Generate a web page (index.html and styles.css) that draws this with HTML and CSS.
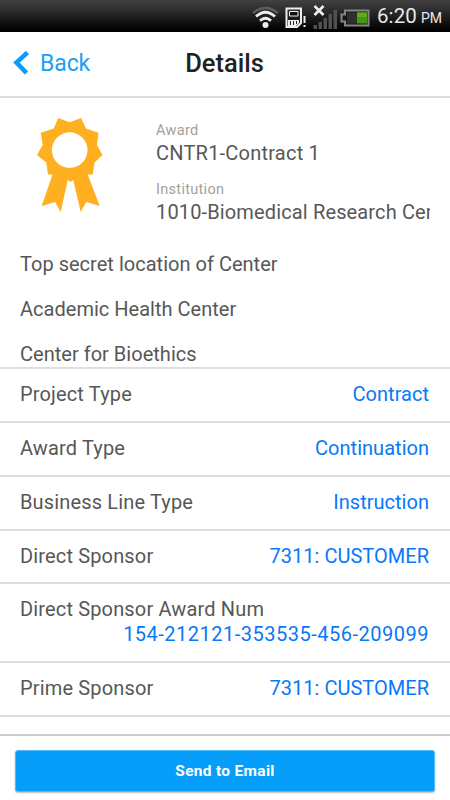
FILE: index.html
```html
<!DOCTYPE html>
<html lang="en">
<head>
<meta charset="utf-8">
<title>Details</title>
<link rel="stylesheet" href="styles.css">
</head>
<body>
<div class="screen">
  <div class="status">
    <svg class="status-icons" width="124" height="31" viewBox="0 0 124 31" fill="none">
      <path d="M1 12Q13.500 2 26 12" stroke="#5c5c5c" stroke-width="2.500"/>
      <path d="M4 15.500Q13.500 7 23 15.500M8 19.800Q13.500 14.500 19 19.800" stroke="#eee" stroke-width="2.800"/>
      <circle cx="13.500" cy="24" r="3" fill="#eee"/>
      <path d="M34.500 7.500H49V22L45 26H34.500Z" stroke="#eee" stroke-width="2"/>
      <path d="M37.500 10.500H46V15H37.500Z" fill="#111" stroke="#eee" stroke-width="1"/>
      <path d="M36 19H47V22L44 25H36Z" fill="#eee"/>
      <path d="M38.500 20V24M41.500 20V24M44.500 20V23" stroke="#222"/>
      <path d="M52.500 15V22M52.500 24V26" stroke="#eee" stroke-width="2"/>
      <path d="M62.500 5L71.500 14M71.500 5L62.500 14" stroke="#eee" stroke-width="2.600"/>
      <path d="M61.500 24h3.500v4h-3.500zM66.500 21h3.500v7h-3.500zM71.500 17h3.500v11h-3.500zM76.500 13h3.500v15h-3.500zM81.500 9h3.500v19h-3.500z" fill="#505050"/>
      <path d="M93 9.500H116.500V24.500H93V20.500H89.500V13.500H93Z" fill="#181818" stroke="#858585" stroke-width="2"/>
      <path d="M95 11.500H105V22.500H95Z" fill="#303030"/>
      <path d="M105 11.500H115V22.500H105Z" fill="#439b12"/>
      <path d="M105 11.500H115V16H105Z" fill="#5cab20"/>
    </svg>
    <span class="clock">6:20</span><span class="meridiem">PM</span>
  </div>
  <header class="navbar">
    <a class="back">
      <svg width="16" height="25" viewBox="0 0 16 25"><path d="M14.500 1.500L3.500 11.500L13.500 22" fill="none" stroke="#0a9df8" stroke-width="4.600"/></svg>
      <span>Back</span>
    </a>
    <h1>Details</h1>
  </header>
  <main class="content">
    <section class="summary">
      <svg class="ribbon" width="66" height="95" viewBox="0 0 66 95" fill="#ffb020">
        <path fill-rule="evenodd" d="M21.300 0L32.500 4.300L44 0L49 10.500L61.500 14.700L60 27L65.500 37L57.500 44.500L55.700 56.500L50.700 56.500L62.700 88L49.300 84L43.700 94L36.300 62L33.500 64L30.700 62L23.700 94L18 84L4.700 88L15.500 56.500L11 56.500L9.300 44.500L0 37L5.700 27L3.700 14.700L16.700 10.500ZM32.700 14.300A17.800 17.800 0 1 0 32.700 49.900A17.800 17.800 0 1 0 32.700 14.300Z"/>
      </svg>
      <dl class="facts">
        <dt>Award</dt><dd class="award">CNTR1-Contract 1</dd>
        <dt>Institution</dt><dd class="institution">1010-Biomedical Research Center</dd>
      </dl>
    </section>
    <section class="places">
      <p>Top secret location of Center</p>
      <p>Academic Health Center</p>
      <p>Center for Bioethics</p>
    </section>
    <ul class="rows">
      <li><span>Project Type</span><b>Contract</b></li>
      <li><span>Award Type</span><b>Continuation</b></li>
      <li><span>Business Line Type</span><b>Instruction</b></li>
      <li><span>Direct Sponsor</span><b>7311: CUSTOMER</b></li>
      <li class="tall"><span>Direct Sponsor Award Num</span><b class="number">154-212121-353535-456-209099</b></li>
      <li><span>Prime Sponsor</span><b>7311: CUSTOMER</b></li>
      <li class="last"><span>Prime Sponsor Award Num</span></li>
    </ul>
  </main>
  <footer class="footer"><button class="send">Send to Email</button></footer>
</div>
</body>
</html>
```
FILE: styles.css
```css
* { box-sizing: border-box; }
body, h1, dl, dd, p, ul { margin: 0; padding: 0; }
body { font-family: Roboto, "Liberation Sans", sans-serif; color: #575757; background: #fff; }
.screen { height: 800px; display: flex; flex-direction: column; overflow: hidden; }
.status { flex: none; height: 32px; display: flex; align-items: center; justify-content: flex-end; padding-right: 8px; background: linear-gradient(#414141, #2b2b2b 35%, #000 95%); color: #e8e8e8; }
.status-icons { margin-right: 1px; }
.clock { font-size: 20.500px; letter-spacing: .1px; line-height: 32px; }
.meridiem { font-size: 14px; margin: 4px 0 0 4px; }
.navbar { flex: none; height: 66px; display: grid; grid-template-columns: 1fr auto 1fr; align-items: center; padding: 0 14px 2px 13px; border-bottom: 2px solid #dcdcdc; }
.back { display: flex; align-items: center; gap: 11px; color: #1c9ff5; font-size: 23px; letter-spacing: -.1px; }
h1 { font-size: 25.500px; font-weight: 500; color: #222; }
.content { flex: 1; min-height: 0; overflow: hidden; }
.summary { display: flex; padding: 20px 20px 0 37px; height: 143px; }
.ribbon { flex: none; margin-right: 53px; }
.facts { flex: 1; min-width: 0; padding-top: 3px; }
dt { font-size: 14.500px; line-height: 20px; color: #a0a0a0; letter-spacing: .3px; }
dd { font-size: 20px; line-height: 25px; letter-spacing: .22px; white-space: nowrap; overflow: hidden; }
.award { margin-bottom: 14px; }
.institution { letter-spacing: .14px; }
.places { height: 126px; padding: 11px 0 0 20px; font-size: 20px; letter-spacing: .02px; }
.places p { line-height: 25px; margin-bottom: 20px; }
.rows { list-style: none; font-size: 20px; letter-spacing: .15px; }
.rows li { height: 53.850px; padding: 13px 21px 0 20px; border-top: 2px solid #dedede; display: flex; flex-wrap: wrap; justify-content: space-between; align-content: flex-start; line-height: 25px; }
.rows .tall { height: 78.800px; }
.rows .last { padding-top: 13px; }
.rows b { font-weight: 400; color: #0878f8; letter-spacing: .02px; }
.rows .number { margin-left: auto; letter-spacing: .5px; }
.footer { flex: none; height: 66px; border-top: 2px solid #ccc; padding: 14px 15px 8px; }
.send { display: block; width: 100%; height: 42px; padding: 0; border: 1px solid #55bafa; border-radius: 3px; background: #069ef8; color: #fff; font: 700 15.500px/40px Roboto, sans-serif; letter-spacing: .3px; box-shadow: 0 1px 2px #0004; }
```
